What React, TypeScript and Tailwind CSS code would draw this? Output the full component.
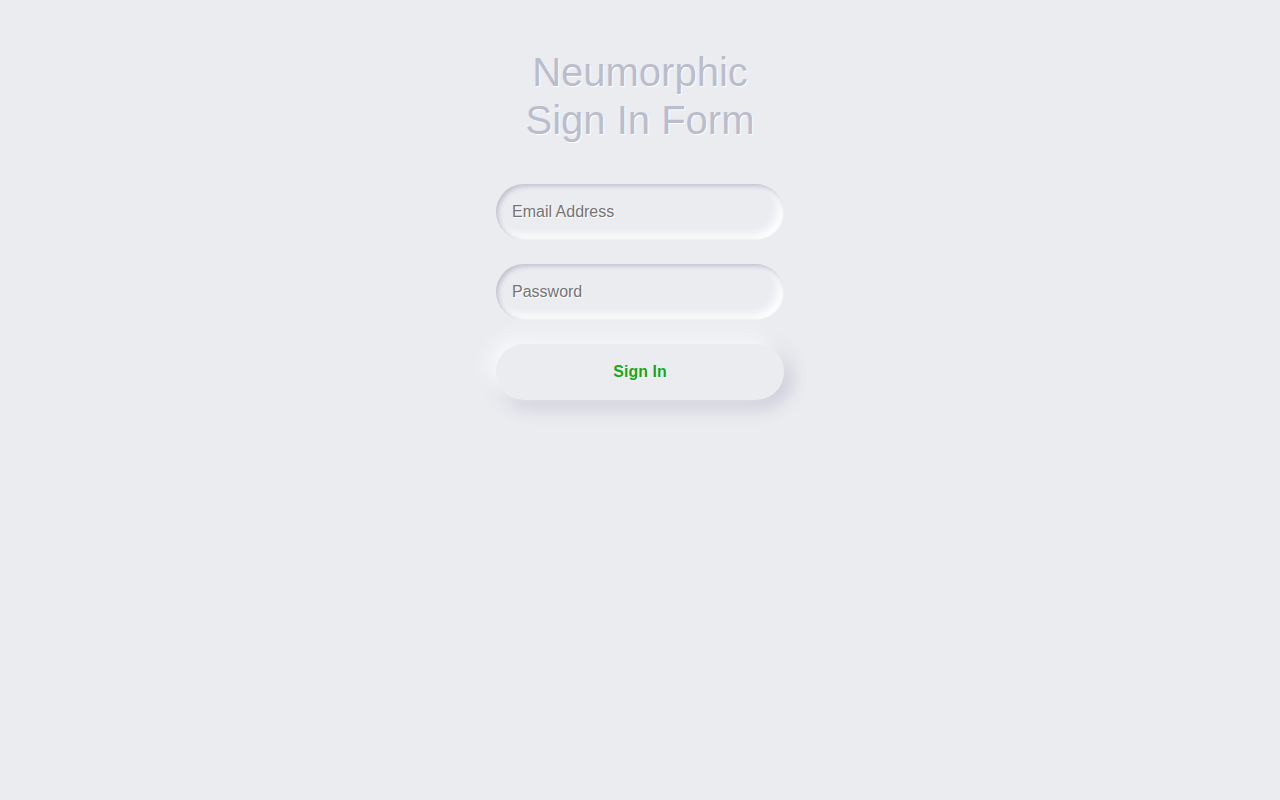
export default function App() {
  return (
    <div className="min-h-screen w-full bg-[#ebecf0] font-['Liberation_Sans',Arial,sans-serif]">
      <div className="mx-auto flex w-[288px] flex-col items-center pt-[48px]">
        <h1 className="whitespace-nowrap text-center text-[40px] leading-[48px] text-[#babecc] [text-shadow:1px_1px_1px_#fff]">
          Neumorphic
          <br />
          Sign In Form
        </h1>

        <form className="mt-[40px] flex w-full flex-col gap-[24px]" onSubmit={(e) => e.preventDefault()}>
          <input
            type="email"
            placeholder="Email Address"
            className="h-[56px] w-full rounded-full bg-[#ebecf0] px-[16px] text-[16px] text-[#61677c] outline-none shadow-[inset_2px_2px_5px_#babecc,inset_-5px_-5px_10px_#ffffff] placeholder:text-[#757575] [text-shadow:1px_1px_0_#fff]"
          />
          <input
            type="password"
            placeholder="Password"
            className="h-[56px] w-full rounded-full bg-[#ebecf0] px-[16px] text-[16px] text-[#61677c] outline-none shadow-[inset_2px_2px_5px_#babecc,inset_-5px_-5px_10px_#ffffff] placeholder:text-[#757575] [text-shadow:1px_1px_0_#fff]"
          />
          <button
            type="submit"
            className="h-[56px] w-full rounded-full bg-[#ebecf0] text-[16px] font-bold text-[#16a816] shadow-[-5px_-5px_20px_#ffffff,5px_5px_20px_#babecc] [text-shadow:1px_1px_0_#fff]"
          >
            Sign In
          </button>
        </form>
      </div>
    </div>
  )
}
